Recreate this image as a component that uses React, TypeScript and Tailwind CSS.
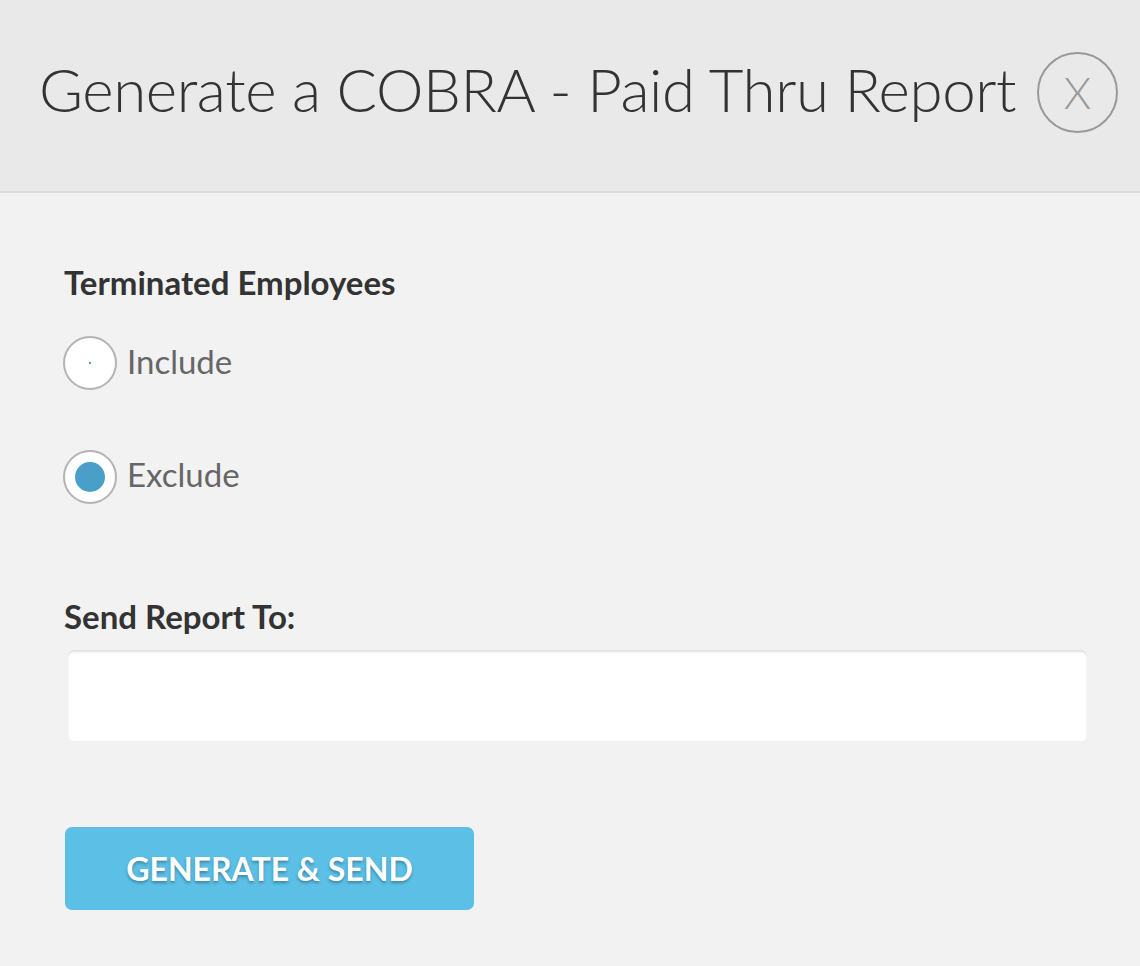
import React from "react";

export default function App() {
  return (
    <div className="w-[1140px] h-[966px] bg-[#f2f2f2] overflow-hidden" style={{ fontFamily: "Lato, 'Open Sans', sans-serif" }}>
      <div className="h-[193px] bg-[#e9e9e9] border-b-2 border-[#dcdcdc] flex items-center pl-[39px] pr-[22px] justify-between pb-[6px]">
        <h1 className="text-[60px] font-light text-[#333] leading-none tracking-[-0.4px] pb-[8px]">Generate a COBRA - Paid Thru Report</h1>
        <div className="w-[81px] h-[81px] rounded-full border-2 border-[#999] flex items-center justify-center text-[#999] text-[44px] font-light leading-none pb-[2px]">X</div>
      </div>
      <div className="pl-[64px] pr-[53px]">
        <div className="pt-[73px] text-[33px] font-bold text-[#333] leading-none">Terminated Employees</div>
        <div className="mt-[37px] flex items-center gap-[10px]">
          <div className="w-[54px] h-[54px] rounded-full border-2 border-[#b3b3b3] bg-white flex items-center justify-center -ml-[1px]">
            <div className="w-[2px] h-[2px] bg-[#4a9fc8]" />
          </div>
          <span className="text-[33px] text-[#666] leading-none pb-[4px]">Include</span>
        </div>
        <div className="mt-[60px] flex items-center gap-[10px]">
          <div className="w-[54px] h-[54px] rounded-full border-2 border-[#b3b3b3] bg-white flex items-center justify-center -ml-[1px]">
            <div className="w-[30px] h-[30px] rounded-full bg-[#4a9fc8]" />
          </div>
          <span className="text-[33px] text-[#666] leading-none pb-[5px]">Exclude</span>
        </div>
        <div className="mt-[96px] text-[33px] font-bold text-[#333] leading-none">Send Report To:</div>
        <div className="mt-[17px] ml-[4px] h-[91px] bg-white rounded-[6px] shadow-[inset_0_2px_2px_rgba(0,0,0,0.12)]" />
        <button className="mt-[86px] ml-[1px] w-[409px] h-[83px] bg-[#5bbfe6] rounded-[7px] text-white text-[32px] font-bold leading-none [text-shadow:0_2px_3px_rgba(0,0,0,0.3)]">GENERATE &amp; SEND</button>
      </div>
    </div>
  );
}
